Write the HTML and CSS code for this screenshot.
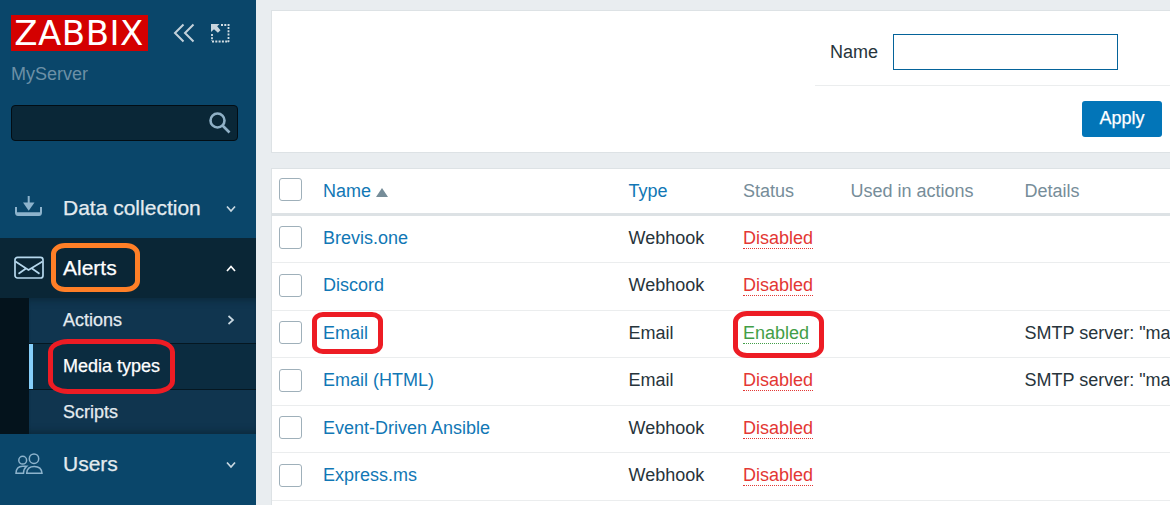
FILE: index.html
```html
<!DOCTYPE html>
<html lang="en">
<head>
<meta charset="utf-8">
<title>Media types</title>
<link rel="stylesheet" href="styles.css">
</head>
<body>
<aside class="sidebar">
  <header class="brand">
    <svg class="logo" width="137" height="36" viewBox="0 0 137 36"><rect width="137" height="36" fill="#d40000"/><text x="3.300" y="30.200" textLength="129" lengthAdjust="spacing">ZABBIX</text></svg>
    <svg class="collapse" width="22" height="20" viewBox="0 0 22 20"><path d="M10.500 1.500 2 10l8.500 8.500M20.500 1.500 12 10l8.500 8.500"/></svg>
    <svg class="kiosk" width="19" height="19" viewBox="0 0 19 19"><path class="dots" d="M10 1h8.500M17.500 3v15M1 17.500h17M1 10v7"/><path class="arrow" d="M0 0h8.500L6.200 2.300l3.300 3.900-2.600 2.600-3.900-3.600L0 8z"/></svg>
  </header>
  <div class="server">MyServer</div>
  <div class="search"><svg width="24" height="24" viewBox="0 0 24 24"><circle cx="9.500" cy="9.500" r="7"/><path d="m14.500 14.500 7 7"/></svg></div>
  <nav>
    <div class="item">
      <svg class="icon" width="30" height="24" viewBox="0 0 30 24"><path class="bold" d="M2 11v5.500q0 2.500 2.500 2.500h20q2.500 0 2.500-2.500V11M14.700 0v8"/><path class="fill" d="M9 6.500h11.500l-5.800 8.300z"/><path class="fill" d="M2 16.300h25v2.200q-1 1.200-2.500 1.200h-20q-1.500 0-2.500-1.200z"/></svg>
      <span>Data collection</span>
      <svg class="chev" width="10" height="10" viewBox="0 0 10 10"><path d="m1 2.500 4 4.500 4-4.500"/></svg>
    </div>
    <div class="item open">
      <svg class="icon" width="30" height="24" viewBox="0 0 30 24"><rect x="1" y="1.300" width="28" height="20.700" rx="2.500"/><path d="m1.500 5.500 13 8.500 14-8.500M4.500 17.800l7.500-5.300M25.500 17.800 18 12.500"/></svg>
      <span>Alerts</span>
      <svg class="chev" width="10" height="10" viewBox="0 0 10 10"><path d="m1 7 4-4.500 4 4.500"/></svg>
    </div>
    <div class="submenu">
      <div class="sub">Actions<svg class="chev" width="10" height="10" viewBox="0 0 10 10"><path d="m2.500 1 4.500 4-4.500 4"/></svg></div>
      <div class="sub selected">Media types</div>
      <div class="sub">Scripts</div>
    </div>
    <div class="item">
      <svg class="icon" width="30" height="24" viewBox="0 0 30 24"><circle cx="8.700" cy="8.200" r="3.900"/><circle cx="20" cy="6.700" r="4.700"/><path d="M9.500 21.300H2q.2-7 6.500-7h4q-3 2.500-3 7zM12.700 21.300H28q-.5-6.700-7.700-6.700t-7.600 6.700z"/></svg>
      <span>Users</span>
      <svg class="chev" width="10" height="10" viewBox="0 0 10 10"><path d="m1 2.500 4 4.500 4-4.500"/></svg>
    </div>
  </nav>
</aside>
<main class="main">
  <section class="filter">
    <div class="field"><label for="name">Name</label><input id="name" type="text"></div>
    <div class="buttons"><button type="button">Apply</button></div>
  </section>
  <section class="table">
    <div class="row head"><i class="box"></i><span class="link">Name<b class="sort"></b></span><span class="link">Type</span><span>Status</span><span>Used in actions</span><span>Details</span></div>
    <div class="row"><i class="box"></i><span class="link">Brevis.one</span><span>Webhook</span><span><a class="off">Disabled</a></span></div>
    <div class="row tall"><i class="box"></i><span class="link">Discord</span><span>Webhook</span><span><a class="off">Disabled</a></span></div>
    <div class="row"><i class="box"></i><span class="link">Email</span><span>Email</span><span><a class="on">Enabled</a></span><span></span><span class="details">SMTP server: "ma</span></div>
    <div class="row tall"><i class="box"></i><span class="link">Email (HTML)</span><span>Email</span><span><a class="off">Disabled</a></span><span></span><span class="details">SMTP server: "ma</span></div>
    <div class="row"><i class="box"></i><span class="link">Event-Driven Ansible</span><span>Webhook</span><span><a class="off">Disabled</a></span></div>
    <div class="row tall"><i class="box"></i><span class="link">Express.ms</span><span>Webhook</span><span><a class="off">Disabled</a></span></div>
  </section>
</main>
<div class="mark mark-alerts"></div>
<div class="mark mark-media"></div>
<div class="mark mark-email"></div>
<div class="mark mark-enabled"></div>
</body>
</html>
```
FILE: styles.css
```css
* { box-sizing: border-box; }
body {
  margin: 0;
  display: flex;
  width: 1170px;
  height: 505px;
  overflow: hidden;
  position: relative;
  background: #e9edf0;
  color: #27343b;
  font: 18px/20px "Liberation Sans", Arial, sans-serif;
}
svg { display: block; flex: none; fill: none; }

/* Sidebar */
.sidebar { width: 256px; height: 505px; flex: none; background: #0a466a; }
.brand { display: flex; align-items: flex-start; padding: 15px 0 0 11px; height: 64px; }
.logo text { font: 34px "DejaVu Sans", sans-serif; fill: #fff; }
.collapse { margin: 8px 0 0 25px; stroke: #c3d1da; stroke-width: 2; }
.kiosk { margin: 9px 0 0 16px; }
.dots { stroke: #d3dee4; stroke-width: 1.800; stroke-dasharray: 2 1.300; }
.arrow { fill: #c9d6de; }
.server { padding-left: 11px; color: #6c90a6; height: 41px; }
.search {
  display: flex;
  justify-content: flex-end;
  width: 227px;
  height: 36px;
  margin-left: 11px;
  padding: 5px 5px 0 0;
  background: #0a2737;
  border: 1px solid #020d14;
  border-radius: 4px;
}
.search svg { stroke: #8fb0c6; stroke-width: 2.600; }
nav { padding-top: 37px; }
.item {
  display: flex;
  align-items: center;
  height: 60px;
  padding: 0 20px 0 14px;
  color: #e4ebef;
  font-size: 21px;
  line-height: 24px;
}
.item span { flex: 1; margin-left: 19px; }
.open { background: #0a2636; color: #fff; }
.item span, .sub, .buttons button { -webkit-text-stroke: 0.25px currentColor; }
.icon { stroke: #8db3cc; stroke-width: 1.500; }
.open .icon { stroke: #b6d8ed; stroke-width: 1.700; }
.icon .bold { stroke-width: 2; }
.icon .fill { fill: #8db3cc; stroke: none; }
.chev { stroke: #c9d8e1; stroke-width: 1.700; position: relative; top: 1px; }
.open .chev { stroke: #fff; }
.submenu {
  height: 136px;
  border-left: 29px solid #04131c;
  background: #10354f;
  box-shadow: inset 0 9px 9px -8px #0a2636, inset 0 -9px 9px -8px #0a2636;
}
.sub {
  display: flex;
  justify-content: space-between;
  height: 46px;
  padding: 12px 21px 0 34px;
  color: #e4ebef;
  border-bottom: 1px solid #051721;
}
.sub:last-child { height: 44px; border: 0; }
.sub .chev { margin-top: 4px; }
.sub:first-child { padding-right: 20px; }
.sub.selected {
  color: #fff;
  background: linear-gradient(90deg, #86cffa 4px, #0b2c40 4px);
}

/* Content */
.main { flex: none; width: 914px; padding: 10px 0 0 15px; }
.filter {
  height: 143px;
  background: #fff;
  border: 1px solid #dde2e5;
  border-right: 0;
  padding-left: 543px;
}
.field {
  display: flex;
  height: 75px;
  padding: 23px 0 0 15px;
  border-bottom: 1px solid #ebedee;
}
.field label { width: 63px; padding-top: 8px; }
.field input { width: 225px; height: 36px; border: 1px solid #04639a; background: #fff; }
.buttons { display: flex; justify-content: flex-end; padding: 15px 8px 0 0; }
.buttons button {
  width: 80px;
  height: 36px;
  padding: 0 0 2px;
  border: 0;
  border-radius: 3px;
  background: #0275b8;
  color: #fff;
  font: inherit;
}
.table {
  height: 345px;
  margin-top: 15px;
  background: #fff;
  border: 1px solid #dde2e5;
  border-width: 1px 0 0 1px;
}
.row {
  display: grid;
  grid-template-columns: 44px 305.500px 114.500px 107.500px 174px 1fr;
  height: 47px;
  padding: 12px 0 0 7px;
  border-bottom: 1px solid #ebedee;
  white-space: nowrap;
}
.row > * { min-width: 0; }
.details { overflow: hidden; }
.tall { height: 48px; }
.head { border-bottom: 3px solid #dde2e5; color: #768d99; }
.box { width: 23px; height: 23px; margin-top: -2px; border: 1px solid #9fb0ba; border-radius: 3px; }
.tall .box { margin-top: -1px; }
.head .box { margin-top: -3px; }
.link { color: #1177b5; }
.sort {
  display: inline-block;
  margin-left: 5px;
  border: 6px solid transparent;
  border-top: 0;
  border-bottom: 9px solid #768d99;
}
.off, .on { display: inline-block; height: 21px; border-bottom: 1px dotted; }
.off { color: #e33734; }
.on { color: #429e47; }

/* Highlight outlines over the page */
.mark { position: absolute; border: 5px solid #ed1c24; border-radius: 14px / 11px; }
.mark-alerts { left: 51px; top: 243px; width: 89px; height: 49px; border-color: #ff7f27; }
.mark-media { left: 48px; top: 339px; width: 127px; height: 55px; border-radius: 20px / 13px; }
.mark-email { left: 312px; top: 312px; width: 71px; height: 42px; border-radius: 11px / 9px; }
.mark-enabled { left: 733px; top: 311px; width: 91px; height: 47px; }
```
